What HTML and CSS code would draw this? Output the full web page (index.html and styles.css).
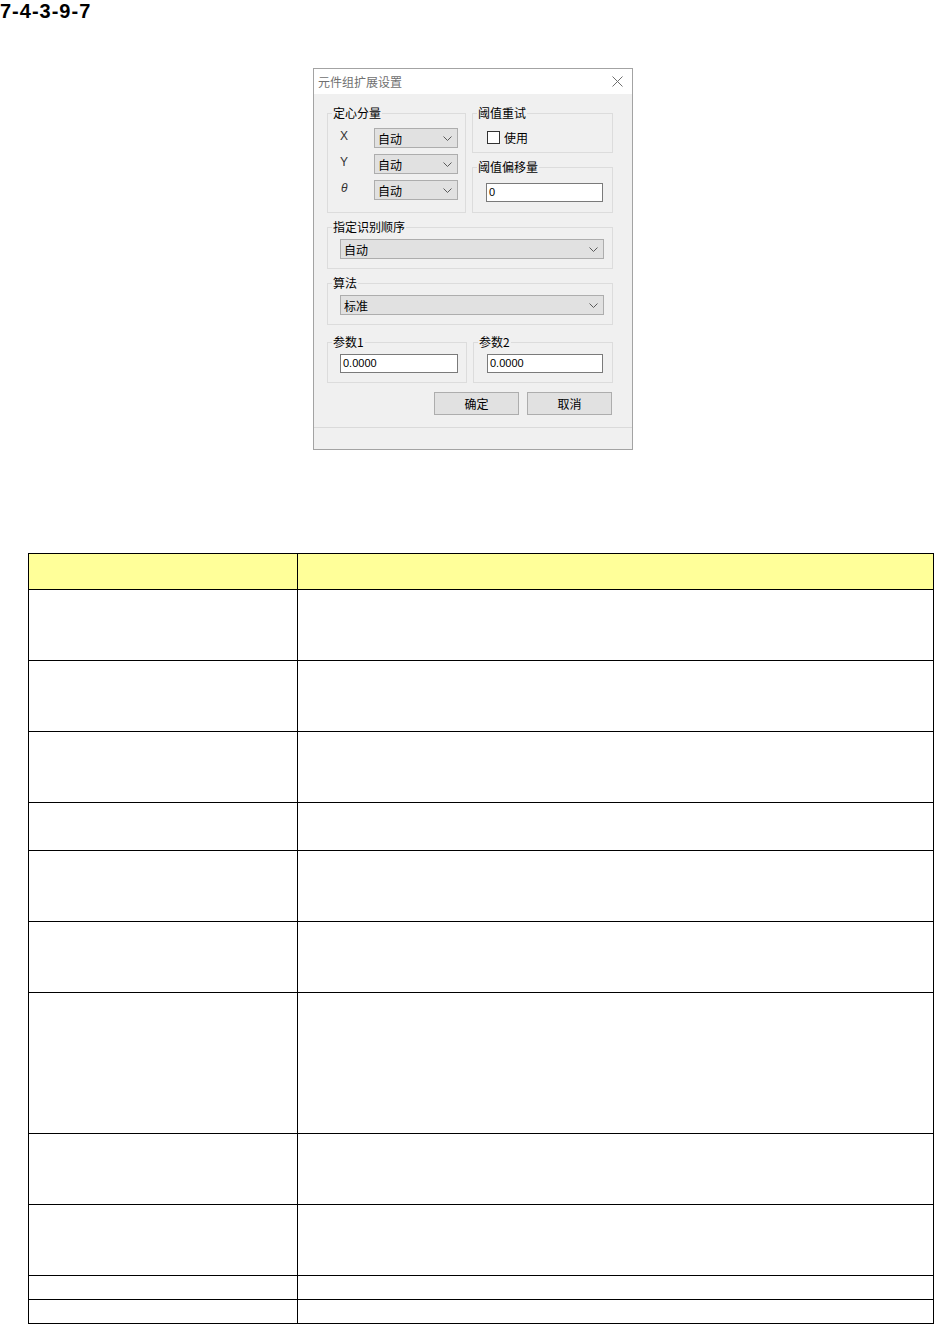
FILE: index.html
```html
<!DOCTYPE html>
<html lang="zh">
<head>
    <meta charset="UTF-8">
    <title>7-4-3-9-7 元件组扩展设置</title>
    <link rel="stylesheet" href="styles.css">
</head>
<body>

    <h1 class="fig-no">7-4-3-9-7</h1>

    <div class="dialog">
        <div class="titlebar">
            <span class="title">元件组扩展设置</span>
            <svg class="close" width="11" height="11" viewBox="0 0 11 11">
                <path d="M0.5 0.5 L10.5 10.5 M10.5 0.5 L0.5 10.5" stroke="#6e6e6e" stroke-width="1" fill="none"/>
            </svg>
        </div>

        <div class="dlg-body">
            <div class="top-row">
                <fieldset class="group centre">
                    <legend>定心分量</legend>
                    <div class="axis-grid">
                        <span class="axis">X</span>
                        <div class="combo"><span>自动</span><svg class="chev" width="9" height="5" viewBox="0 0 9 5"><path d="M0.5 0.5 L4.5 4.5 L8.5 0.5" stroke="#5a5a5a" fill="none"/></svg></div>
                        <span class="axis">Y</span>
                        <div class="combo"><span>自动</span><svg class="chev" width="9" height="5" viewBox="0 0 9 5"><path d="M0.5 0.5 L4.5 4.5 L8.5 0.5" stroke="#5a5a5a" fill="none"/></svg></div>
                        <span class="axis theta">θ</span>
                        <div class="combo"><span>自动</span><svg class="chev" width="9" height="5" viewBox="0 0 9 5"><path d="M0.5 0.5 L4.5 4.5 L8.5 0.5" stroke="#5a5a5a" fill="none"/></svg></div>
                    </div>
                </fieldset>

                <div class="right-col">
                    <fieldset class="group retry">
                        <legend>阈值重试</legend>
                        <div class="check"><span class="box"></span>使用</div>
                    </fieldset>
                    <fieldset class="group offset">
                        <legend>阈值偏移量</legend>
                        <div class="edit">0</div>
                    </fieldset>
                </div>
            </div>

            <fieldset class="group wide">
                <legend>指定识别顺序</legend>
                <div class="combo"><span>自动</span><svg class="chev" width="9" height="5" viewBox="0 0 9 5"><path d="M0.5 0.5 L4.5 4.5 L8.5 0.5" stroke="#5a5a5a" fill="none"/></svg></div>
            </fieldset>

            <fieldset class="group wide">
                <legend>算法</legend>
                <div class="combo"><span>标准</span><svg class="chev" width="9" height="5" viewBox="0 0 9 5"><path d="M0.5 0.5 L4.5 4.5 L8.5 0.5" stroke="#5a5a5a" fill="none"/></svg></div>
            </fieldset>

            <div class="param-row">
                <fieldset class="group param">
                    <legend>参数1</legend>
                    <div class="edit">0.0000</div>
                </fieldset>
                <fieldset class="group param">
                    <legend>参数2</legend>
                    <div class="edit">0.0000</div>
                </fieldset>
            </div>

            <div class="buttons">
                <button class="btn ok">确定</button>
                <button class="btn cancel">取消</button>
            </div>
        </div>

        <div class="statusbar"></div>
    </div>

    <table class="spec">
        <tr class="head"><th class="c1"></th><th></th></tr>
        <tr class="l3"><td></td><td></td></tr>
        <tr class="l3"><td></td><td></td></tr>
        <tr class="l3"><td></td><td></td></tr>
        <tr class="l2"><td></td><td></td></tr>
        <tr class="l3"><td></td><td></td></tr>
        <tr class="l3"><td></td><td></td></tr>
        <tr class="l6"><td></td><td></td></tr>
        <tr class="l3"><td></td><td></td></tr>
        <tr class="l3"><td></td><td></td></tr>
        <tr class="l1"><td></td><td></td></tr>
        <tr class="l1"><td></td><td></td></tr>
    </table>

</body>
</html>
```

FILE: styles.css
```css
body {
    margin: 0;
    background: #fff;
    font-family: "Liberation Sans", Arial, sans-serif;
    color: #000;
}
.fig-no {
    margin: 0;
    font-size: 20px;
    line-height: 23px;
    font-weight: bold;
    letter-spacing: 1px;
}

/* dialog */
.dialog {
    margin: 45px 0 0 313px;
    width: 318px;
    border: 1px solid #a3a3a3;
    background: #f0f0f0;
    font-family: "Noto Sans CJK SC", "Liberation Sans", sans-serif;
    font-size: 12px;
}
.titlebar {
    height: 25px;
    background: #fff;
    display: flex;
    align-items: center;
    justify-content: space-between;
    padding: 0 9px 0 4px;
}
.title {
    color: #707070;
    font-size: 12px;
}
.dlg-body {
    padding: 11px 19px 12px 13px;
}
.group {
    margin: 0;
    padding: 0;
    border: 1px solid #dcdcdc;
    min-width: 0;
}
.group legend {
    margin-left: 4px;
    padding: 0 1px;
    line-height: 16px;
    height: 16px;
}
.top-row {
    display: flex;
    gap: 6px;
}
.centre {
    width: 139px;
    box-sizing: border-box;
    padding: 7px 0 12px;
}
.axis-grid {
    display: grid;
    grid-template-columns: 34px 84px;
    grid-auto-rows: 20px;
    row-gap: 6px;
    align-items: center;
    margin-left: 12px;
}
.axis {
    font-family: "Liberation Sans", sans-serif;
    color: #333;
    line-height: 20px;
    margin-top: -4px;
}
.theta {
    font-style: italic;
    padding-left: 1px;
}
.right-col {
    flex: 1;
    display: flex;
    flex-direction: column;
    gap: 6px;
}
.retry {
    padding: 8px 0 7px;
}
.check {
    display: flex;
    align-items: center;
    gap: 4px;
    height: 16px;
    margin-left: 14px;
}
.box {
    width: 11px;
    height: 11px;
    border: 1px solid #333;
    background: #fff;
}
.offset {
    padding: 8px 0 10px;
}
.offset .edit {
    margin: 0 9px 0 13px;
}
.edit {
    height: 19px;
    box-sizing: border-box;
    border: 1px solid #7a7a7a;
    background: #fff;
    font-family: "Liberation Sans", sans-serif;
    font-size: 11px;
    line-height: 17px;
    padding-left: 2px;
}
.combo {
    height: 20px;
    box-sizing: border-box;
    border: 1px solid #adadad;
    background: #e1e1e1;
    display: flex;
    align-items: center;
    justify-content: space-between;
    padding: 0 5px 0 3px;
}
.wide {
    margin-top: 6px;
    padding: 4px 0 9px;
}
.wide .combo {
    margin: 0 8px 0 12px;
}
.param-row {
    display: flex;
    gap: 6px;
    margin-top: 9px;
}
.param {
    flex: 1;
    padding: 4px 0 9px;
}
.param .edit {
    margin: 0 8px 0 12px;
}
.param:last-child .edit {
    margin: 0 9px 0 13px;
}
.buttons {
    display: flex;
    justify-content: flex-end;
    gap: 8px;
    margin-top: 9px;
    padding-right: 1px;
}
.btn {
    height: 23px;
    width: 85px;
    border: 1px solid #adadad;
    background: #e1e1e1;
    font-family: "Noto Sans CJK SC", sans-serif;
    font-size: 12px;
    padding: 0;
    color: #000;
}
.statusbar {
    height: 21px;
    border-top: 1px solid #dadada;
}

/* table */
.spec {
    margin: 103px 0 0 28px;
    width: 906px;
    border-collapse: collapse;
}
.spec th,
.spec td {
    border: 1px solid #000;
    padding: 0;
}
.spec .c1 {
    width: 268px;
}
.spec .head th {
    background: #ffff99;
}
.spec .head { height: 36px; }
.spec .l1 { height: 24px; }
.spec .l2 { height: 48px; }
.spec .l3 { height: 71px; }
.spec .l6 { height: 141px; }
```
